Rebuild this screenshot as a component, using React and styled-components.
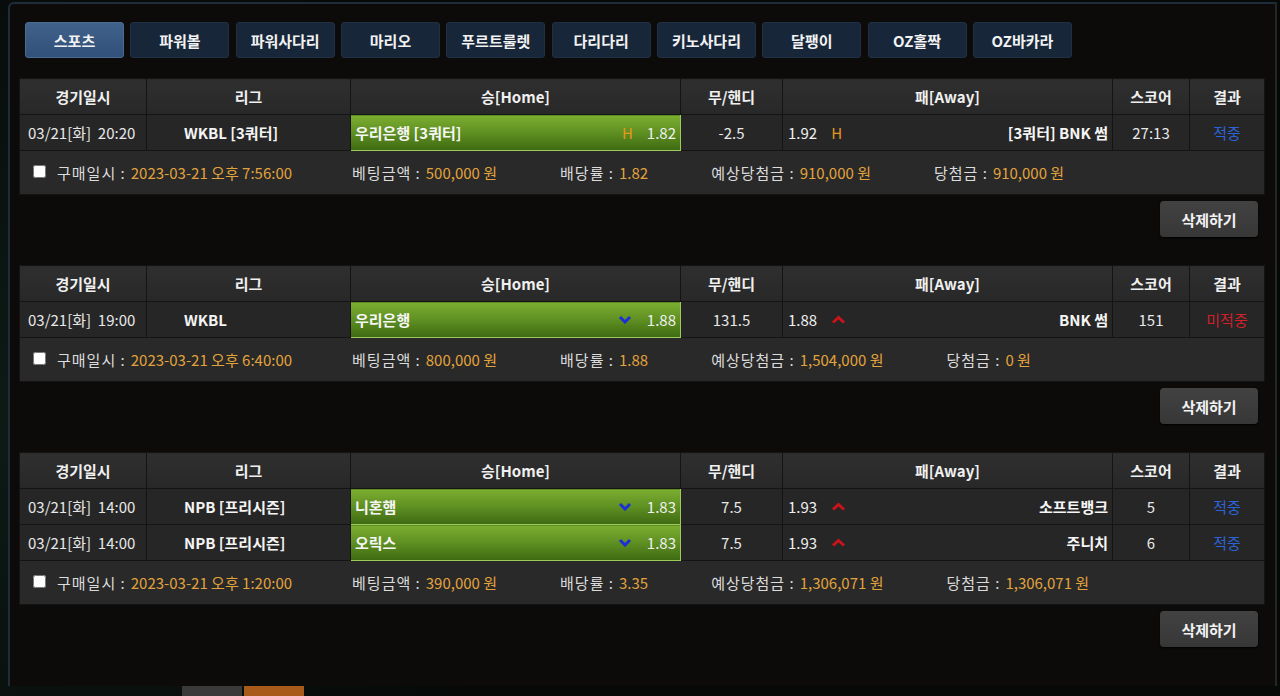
import React from 'react';
import styled, { createGlobalStyle } from 'styled-components';

const GlobalStyle = createGlobalStyle`
  html, body {
    margin: 0;
    padding: 0;
    background: #070b0a;
    overflow: hidden;
  }
  body {
    font-family: "Noto Sans CJK KR", "Noto Sans", sans-serif;
    font-size: 15px;
    color: #e6e6e6;
  }
`;

const tabs = ['스포츠', '파워볼', '파워사다리', '마리오', '푸르트룰렛', '다리다리', '키노사다리', '달팽이', 'OZ홀짝', 'OZ바카라'];

const cols = [127, 204, 330, 102, 330, 77, 75];

const bets = [
  {
    games: [
      { date: '03/21[화]', time: '20:20', league: 'WKBL [3쿼터]', home: '우리은행 [3쿼터]', homeOdds: '1.82', mark: 'H', handi: '-2.5', awayOdds: '1.92', away: '[3쿼터] BNK 썸', score: '27:13', win: true },
    ],
    buyAt: '2023-03-21 오후 7:56:00',
    amount: '500,000 원',
    rate: '1.82',
    expected: '910,000 원',
    prize: '910,000 원',
  },
  {
    games: [
      { date: '03/21[화]', time: '19:00', league: 'WKBL', home: '우리은행', homeOdds: '1.88', mark: 'arrow', handi: '131.5', awayOdds: '1.88', away: 'BNK 썸', score: '151', win: false },
    ],
    buyAt: '2023-03-21 오후 6:40:00',
    amount: '800,000 원',
    rate: '1.88',
    expected: '1,504,000 원',
    prize: '0 원',
  },
  {
    games: [
      { date: '03/21[화]', time: '14:00', league: 'NPB [프리시즌]', home: '니혼햄', homeOdds: '1.83', mark: 'arrow', handi: '7.5', awayOdds: '1.93', away: '소프트뱅크', score: '5', win: true },
      { date: '03/21[화]', time: '14:00', league: 'NPB [프리시즌]', home: '오릭스', homeOdds: '1.83', mark: 'arrow', handi: '7.5', awayOdds: '1.93', away: '주니치', score: '6', win: true },
    ],
    buyAt: '2023-03-21 오후 1:20:00',
    amount: '390,000 원',
    rate: '3.35',
    expected: '1,306,071 원',
    prize: '1,306,071 원',
  },
];

const ChevronDown = () => (
  <svg width="14" height="9" viewBox="0 0 14 9">
    <polyline points="2,2 7,7 12,2" fill="none" stroke="#1c2fd6" strokeWidth="3" />
  </svg>
);

const ChevronUp = () => (
  <svg width="15" height="9" viewBox="0 0 15 9">
    <polyline points="2,7.5 7.5,2.5 13,7.5" fill="none" stroke="#c8141a" strokeWidth="3" />
  </svg>
);

const App = () => {
  return (
    <>
      <GlobalStyle />
      <StPage>
        <StPanel>
          <StTabs>
            {tabs.map((t, i) => (
              <StTab key={t} active={i === 0}>{t}</StTab>
            ))}
          </StTabs>

          {bets.map((bet, bi) => (
            <StBetBlock key={bi} first={bi === 0}>
              <StTable>
                <colgroup>
                  {cols.map((w, i) => (
                    <col key={i} style={{ width: w }} />
                  ))}
                </colgroup>
                <thead>
                  <tr>
                    <StTh>경기일시</StTh>
                    <StTh>리그</StTh>
                    <StTh>승[Home]</StTh>
                    <StTh>무/핸디</StTh>
                    <StTh>패[Away]</StTh>
                    <StTh>스코어</StTh>
                    <StTh>결과</StTh>
                  </tr>
                </thead>
                <tbody>
                  {bet.games.map((g, gi) => (
                    <tr key={gi}>
                      <StDateTd>{g.date}&nbsp;&nbsp;{g.time}</StDateTd>
                      <StLeagueTd>{g.league}</StLeagueTd>
                      <StHomeTd>
                        <StCellFlex>
                          <StTeam>{g.home}</StTeam>
                          <StOddsBox>
                            {g.mark === 'H' ? <StMark>H</StMark> : <StIconWrap><ChevronDown /></StIconWrap>}
                            <span>{g.homeOdds}</span>
                          </StOddsBox>
                        </StCellFlex>
                      </StHomeTd>
                      <StTd>{g.handi}</StTd>
                      <StAwayTd>
                        <StCellFlex>
                          <StOddsBox>
                            <span>{g.awayOdds}</span>
                            {g.mark === 'H' ? <StMark>H</StMark> : <StIconWrap><ChevronUp /></StIconWrap>}
                          </StOddsBox>
                          <StTeam>{g.away}</StTeam>
                        </StCellFlex>
                      </StAwayTd>
                      <StTd>{g.score}</StTd>
                      <StResultTd win={g.win}>{g.win ? '적중' : '미적중'}</StResultTd>
                    </tr>
                  ))}
                  <tr>
                    <StInfoTd colSpan={7}>
                      <StInfo>
                        <StInfoItem lead>
                          <StCheck type="checkbox" />
                          <StLabel>구매일시 :</StLabel><StValue>{bet.buyAt}</StValue>
                        </StInfoItem>
                        <StInfoItem><StLabel>베팅금액 :</StLabel><StValue>{bet.amount}</StValue></StInfoItem>
                        <StInfoItem><StLabel>배당률 :</StLabel><StValue>{bet.rate}</StValue></StInfoItem>
                        <StInfoItem><StLabel>예상당첨금 :</StLabel><StValue>{bet.expected}</StValue></StInfoItem>
                        <StInfoItem><StLabel>당첨금 :</StLabel><StValue>{bet.prize}</StValue></StInfoItem>
                      </StInfo>
                    </StInfoTd>
                  </tr>
                </tbody>
              </StTable>
              <StButtonRow>
                <StDeleteButton>삭제하기</StDeleteButton>
              </StButtonRow>
            </StBetBlock>
          ))}
        </StPanel>
        <StPager>
          <StPageBlock />
          <StPageBlock active />
        </StPager>
      </StPage>
    </>
  );
};

export default App;

const StPage = styled.div`
  width: 1280px;
  height: 696px;
  overflow: hidden;
  background: radial-gradient(circle at 0 60%, #0d1a14 0, #060908 40%);
`;

const StPanel = styled.div`
  margin-left: 8px;
  margin-top: 2px;
  width: 1269px;
  height: 684px;
  box-sizing: border-box;
  background: #0d0b0a;
  border-top: 2px solid #1f2c3b;
  border-left: 2px solid #1f2c3b;
  border-right: 2px solid #262626;
  border-top-left-radius: 6px;
  padding: 18px 0 0 9px;
  overflow: hidden;
`;

const StTabs = styled.div`
  display: flex;
  gap: 6.33px;
  margin-left: 6px;
`;

const StTab = styled.div`
  width: 99px;
  height: 36px;
  box-sizing: border-box;
  display: flex;
  align-items: center;
  justify-content: center;
  border-radius: 3px;
  font-size: 15px;
  font-weight: bold;
  color: #f2f2f2;
  background: ${(p) => (p.active ? 'linear-gradient(#40628a, #31507a)' : '#18263a')};
  border: 1px solid ${(p) => (p.active ? '#4a6b92' : '#202f43')};
`;

const StBetBlock = styled.div`
  margin-top: ${(p) => (p.first ? '20px' : '28px')};
`;

const StTable = styled.table`
  width: 1245px;
  table-layout: fixed;
  border-collapse: collapse;
  font-size: 15px;
`;

const StTh = styled.th`
  height: 35px;
  padding: 0;
  background: linear-gradient(#2f2f2f, #282828);
  border: 1px solid #141414;
  color: #f0f0f0;
  font-weight: bold;
  text-align: center;
`;

const StTd = styled.td`
  height: 35px;
  padding: 0 6px;
  background: #262626;
  border: 1px solid #141414;
  color: #e8e8e8;
  text-align: center;
  white-space: nowrap;
  overflow: hidden;
`;

const StDateTd = styled(StTd)`
  text-align: left;
  padding-left: 8px;
`;

const StLeagueTd = styled(StTd)`
  text-align: left;
  padding-left: 37px;
  font-weight: bold;
  color: #f4f4f4;
`;

const StHomeTd = styled(StTd)`
  padding: 0 4px;
  background: linear-gradient(#7cae31, #5e8f22 50%, #3e6a12);
  border: 1px solid #9ccb5c;
`;

const StAwayTd = styled(StTd)`
  padding: 0 4px 0 5px;
`;

const StCellFlex = styled.div`
  display: flex;
  align-items: center;
  justify-content: space-between;
`;

const StTeam = styled.span`
  font-weight: bold;
  color: #f6f6f6;
`;

const StOddsBox = styled.span`
  display: flex;
  align-items: center;
  gap: 14px;
  color: #f0f0f0;
`;

const StMark = styled.span`
  color: #e8961e;
`;

const StIconWrap = styled.span`
  display: flex;
  align-items: center;
  width: 15px;
`;

const StResultTd = styled(StTd)`
  color: ${(p) => (p.win ? '#2c63d8' : '#d2202a')};
`;

const StInfoTd = styled.td`
  height: 43px;
  padding: 0 0 0 13px;
  background: #292929;
  border: 1px solid #141414;
`;

const StInfo = styled.div`
  display: flex;
  align-items: center;
  gap: 63px;
  color: #dcdcdc;
  font-size: 15px;
`;

const StInfoItem = styled.span`
  display: flex;
  align-items: center;
  white-space: pre;
  margin-right: ${(p) => (p.lead ? '-3px' : '0')};
`;

const StLabel = styled.span`
  letter-spacing: 1px;
  margin-right: 5px;
`;

const StCheck = styled.input`
  width: 13px;
  height: 13px;
  margin: 0 11px 3px 0;
  accent-color: #ffffff;
`;

const StValue = styled.span`
  color: #e2a33c;
`;

const StButtonRow = styled.div`
  width: 1245px;
  display: flex;
  justify-content: flex-end;
  margin-top: 6px;
`;

const StDeleteButton = styled.button`
  width: 98px;
  height: 36px;
  margin-right: 6px;
  border: none;
  border-radius: 4px;
  background: linear-gradient(#424242, #373737);
  box-shadow: 0 1px 2px #000;
  color: #f2f2f2;
  font-family: inherit;
  font-size: 15px;
  font-weight: bold;
  cursor: pointer;
`;

const StPager = styled.div`
  display: flex;
  gap: 2px;
  margin-left: 182px;
`;

const StPageBlock = styled.div`
  width: 60px;
  height: 10px;
  background: ${(p) => (p.active ? '#a85a1b' : '#3a3a3a')};
`;
